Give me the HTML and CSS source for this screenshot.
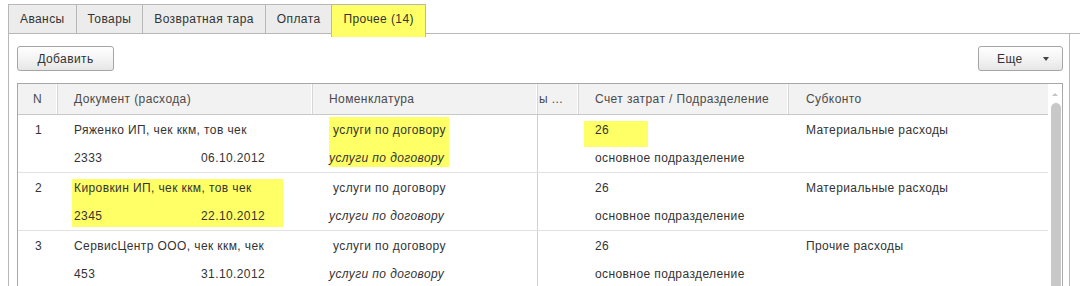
FILE: index.html
```html
<!DOCTYPE html>
<html lang="ru">
<head>
<meta charset="utf-8">
<link rel="stylesheet" href="styles.css">
</head>
<body>
<div class="tabs">
  <div class="tab">Авансы</div>
  <div class="tab">Товары</div>
  <div class="tab">Возвратная тара</div>
  <div class="tab">Оплата</div>
  <div class="tab active">Прочее (14)</div>
  <div class="tab-fill"></div>
</div>
<div class="panel">
  <div class="toolbar">
    <button class="btn add">Добавить</button>
    <button class="btn more">Еще <span class="caret"></span></button>
  </div>
  <div class="table">
    <div class="main">
      <div class="head">
        <div class="hc n">N</div>
        <div class="hc">Документ (расхода)</div>
        <div class="hc">Номенклатура</div>
        <div class="hc x">ы ...</div>
        <div class="hc">Счет затрат / Подразделение</div>
        <div class="hc last">Субконто</div>
      </div>

      <div class="row">
        <div class="c n"><div class="ln">1</div></div>
        <div class="c doc">
          <div class="docin">
            <div class="ln">Ряженко ИП, чек ккм, тов чек</div>
            <div class="ln pair"><span>2333</span><span>06.10.2012</span></div>
          </div>
        </div>
        <div class="c nom">
          <div class="nomin hl">
            <div class="ln sp">услуги по договору</div>
            <div class="ln it">услуги по договору</div>
          </div>
        </div>
        <div class="c"></div>
        <div class="c acc">
          <div class="ln num hl">26</div>
          <div class="ln">основное подразделение</div>
        </div>
        <div class="c sub"><div class="ln">Материальные расходы</div></div>
      </div>

      <div class="row">
        <div class="c n"><div class="ln">2</div></div>
        <div class="c doc">
          <div class="docin hl">
            <div class="ln">Кировкин ИП, чек ккм, тов чек</div>
            <div class="ln pair"><span>2345</span><span>22.10.2012</span></div>
          </div>
        </div>
        <div class="c nom">
          <div class="nomin">
            <div class="ln sp">услуги по договору</div>
            <div class="ln it">услуги по договору</div>
          </div>
        </div>
        <div class="c"></div>
        <div class="c acc">
          <div class="ln num">26</div>
          <div class="ln">основное подразделение</div>
        </div>
        <div class="c sub"><div class="ln">Материальные расходы</div></div>
      </div>

      <div class="row">
        <div class="c n"><div class="ln">3</div></div>
        <div class="c doc">
          <div class="docin">
            <div class="ln">СервисЦентр ООО, чек ккм, чек</div>
            <div class="ln pair"><span>453</span><span>31.10.2012</span></div>
          </div>
        </div>
        <div class="c nom">
          <div class="nomin">
            <div class="ln sp">услуги по договору</div>
            <div class="ln it">услуги по договору</div>
          </div>
        </div>
        <div class="c"></div>
        <div class="c acc">
          <div class="ln num">26</div>
          <div class="ln">основное подразделение</div>
        </div>
        <div class="c sub"><div class="ln">Прочие расходы</div></div>
      </div>
    </div>
    <div class="scroll">
      <div class="arrow"></div>
      <div class="thumb"></div>
    </div>
  </div>
</div>
</body>
</html>
```

FILE: styles.css
```css
html, body {
  margin: 0;
  padding: 0;
  background: #fff;
  height: 100%;
  overflow: hidden;
}
body {
  font-family: "Liberation Sans", Arial, sans-serif;
  font-size: 12px;
  letter-spacing: 0.4px;
  color: #333;
}
.tabs {
  display: flex;
  align-items: flex-end;
  height: 34px;
  padding-left: 8px;
}
.tab {
  height: 28px;
  line-height: 28px;
  padding: 0 11px;
  background: #ececec;
  border: 1px solid #b8b8b8;
  margin-left: -1px;
  color: #333;
}
.tab:first-child { margin-left: 0; }
.tab.active {
  background: #ffff66;
  border-bottom: none;
  height: 32px;
  line-height: 29px;
  padding: 0 11px;
  margin-bottom: -3px;
}
.tab-fill {
  flex: 1;
  border-bottom: 1px solid #b8b8b8;
}
.panel {
  margin-left: 8px;
  width: 1062px;
  height: 400px;
  border-left: 1px solid #b8b8b8;
  border-right: 1px solid #b8b8b8;
  padding: 12px 6px 0 8px;
  box-sizing: border-box;
}
.toolbar {
  display: flex;
  justify-content: space-between;
  margin-bottom: 12px;
}
.btn {
  font: inherit;
  letter-spacing: inherit;
  color: #333;
  height: 25px;
  border: 1px solid #a5a5a5;
  border-radius: 3px;
  background: linear-gradient(#ffffff, #f4f4f4 50%, #e6e6e6);
  padding: 0;
  margin: 0;
}
.add { width: 97px; }
.more {
  width: 85px;
  display: flex;
  align-items: center;
  padding-left: 18px;
  box-sizing: border-box;
}
.caret {
  width: 0;
  height: 0;
  border-left: 3.5px solid transparent;
  border-right: 3.5px solid transparent;
  border-top: 4px solid #444;
  margin-left: 20px;
}
.table {
  display: flex;
  border: 1px solid #a8a8a8;
  height: 300px;
}
.main { width: 1030px; }
.head, .row {
  display: grid;
  grid-template-columns: 40px 255px 225px 41px 210px 259px;
}
.head {
  height: 30px;
  background: #f2f2f2;
  border-bottom: 1px solid #c8c8c8;
  color: #4a4a4a;
}
.hc {
  line-height: 30px;
  padding-left: 16px;
  border-right: 1px solid #d6d6d6;
  box-shadow: inset -1px 0 0 #fff;
  white-space: nowrap;
  overflow: hidden;
}
.hc.n { padding-left: 0; text-align: center; }
.hc.x { padding-left: 1px; }
.hc.last { border-right: none; box-shadow: none; padding-left: 17px; }
.row {
  height: 57px;
  border-bottom: 1px solid #e2e2e2;
}
.c { padding-top: 6px; }
.ln {
  height: 18px;
  line-height: 18px;
  white-space: nowrap;
}
.c .ln + .ln { margin-top: 10px; }
.c.n { text-align: center; padding-left: 1px; }
.c.doc { padding-left: 14px; }
.docin {
  width: 209px;
  padding: 0 0 2px 2px;
}
.docin .ln + .ln { margin-top: 10px; }
.pair {
  display: grid;
  grid-template-columns: 127px auto;
}
.c.nom {
  padding-top: 2px;
  padding-left: 16px;
  border-right: 1px solid #cfcfcf;
}
.nomin {
  width: max-content;
  padding: 4px 3px 0 0;
}
.nomin .ln + .ln { margin-top: 10px; }
.sp { padding-left: 4px; }
.it { font-style: italic; }
.c.acc { padding-left: 16px; }
.num {
  width: 53px;
  height: 26px;
  margin-left: -11px;
  padding-left: 11px;
}
.c.acc .ln + .ln { margin-top: 2px; }
.c.sub { padding-left: 17px; }
.hl { background: #ffff66; }
.scroll {
  width: 16px;
  display: flex;
  flex-direction: column;
  align-items: center;
}
.arrow {
  width: 0;
  height: 0;
  margin-top: 9px;
  margin-bottom: 7px;
  border-left: 3px solid transparent;
  border-right: 3px solid transparent;
  border-bottom: 3px solid #c4c4c4;
}
.thumb {
  width: 10px;
  flex: 1;
  margin-left: 2px;
  background: #c8c8c8;
  border-radius: 5px 5px 0 0;
}
```
